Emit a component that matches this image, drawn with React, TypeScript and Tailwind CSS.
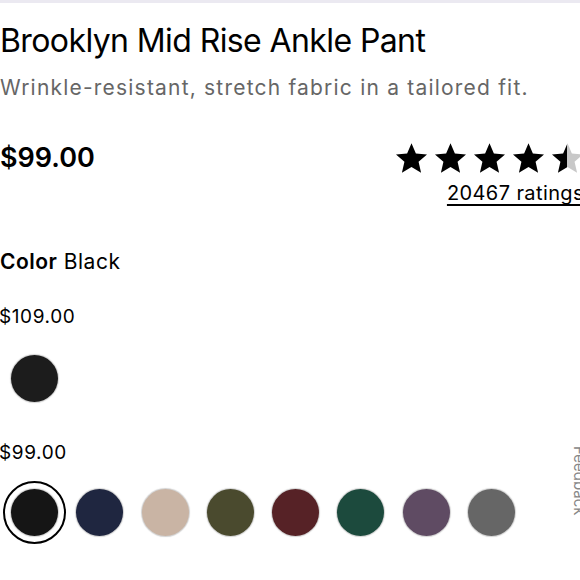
import React from 'react'

const swatches = [
  { name: 'Black', color: '#151515', selected: true },
  { name: 'Navy', color: '#1f2640' },
  { name: 'Sand', color: '#c9b4a4' },
  { name: 'Olive', color: '#4a4a2e' },
  { name: 'Maroon', color: '#562226' },
  { name: 'Forest', color: '#1c4a3d' },
  { name: 'Plum', color: '#5f4b63' },
  { name: 'Grey', color: '#666666' },
]

const Star = ({ half = false }: { half?: boolean }) => (
  <svg width="35" height="34" viewBox="0 0 24 24" className="shrink-0">
    <defs>
      <linearGradient id="halfStar">
        <stop offset="50%" stopColor="#000" />
        <stop offset="50%" stopColor="#c8c8c8" />
      </linearGradient>
    </defs>
    <path
      d="M12 1.5l3.09 7.26 7.86.7-5.96 5.2 1.78 7.7L12 18.3l-6.77 4.06 1.78-7.7-5.96-5.2 7.86-.7z"
      fill={half ? 'url(#halfStar)' : '#000'}
    />
  </svg>
)

const Swatch = ({ color, selected }: { color: string; selected?: boolean }) => (
  <div
    className={
      selected
        ? 'w-[63px] h-[63px] rounded-full border-2 border-black flex items-center justify-center'
        : 'w-[63px] h-[63px] flex items-center justify-center'
    }
  >
    <div
      className="w-[47px] h-[47px] rounded-full shadow-[0_0_1px_1px_rgba(0,0,0,0.18)]"
      style={{ backgroundColor: color }}
    />
  </div>
)

export default function App() {
  return (
    <div
      className="w-[580px] h-[580px] overflow-hidden bg-white border-t-[3px] border-[#ebe9f1] relative"
      style={{ fontFamily: 'Inter, "Liberation Sans", sans-serif' }}
    >
      <div className="w-[584px] flex flex-col text-black">
        {/* Heading */}
        <h1 className="mt-[18px] text-[32px] leading-[40px] tracking-[-0.6px]">Brooklyn Mid Rise Ankle Pant</h1>
        <p className="mt-[13px] text-[21px] leading-[28px] text-[#666] tracking-[1.2px]">
          Wrinkle-resistant, stretch fabric in a tailored fit.
        </p>

        {/* Price + rating */}
        <div className="mt-[38px] flex justify-between items-start">
          <span className="text-[27px] leading-[36px] font-semibold">$99.00</span>
          <div className="flex flex-col items-end">
            <div className="flex gap-[4px] mt-[1px] -mr-[1px]">
              <Star />
              <Star />
              <Star />
              <Star />
              <Star half />
            </div>
            <a className="mt-[6px] text-[20px] leading-[24px] tracking-[0.4px] underline underline-offset-[4px]">
              20467 ratings
            </a>
          </div>
        </div>

        {/* Color */}
        <div className="mt-[43px] text-[21px] leading-[28px] tracking-[0.5px]">
          <span className="font-semibold">Color</span> Black
        </div>

        <div className="mt-[29px] text-[19px] leading-[24px] tracking-[0.6px] -ml-[1px]">$109.00</div>
        <div className="mt-[18px] ml-[3px] flex">
          <Swatch color="#1c1c1c" />
        </div>

        <div className="mt-[31px] text-[19px] leading-[24px] tracking-[0.6px] -ml-[1px]">$99.00</div>
        <div className="mt-[16px] ml-[3px] flex gap-[2.3px]">
          {swatches.map(s => (
            <Swatch key={s.name} color={s.color} selected={s.selected} />
          ))}
        </div>
      </div>

      {/* Feedback tab */}
      <div className="absolute left-[571px] top-[443px] text-[15px] leading-[16px] text-[#888] [writing-mode:vertical-rl]">
        Feedback
      </div>
    </div>
  )
}
